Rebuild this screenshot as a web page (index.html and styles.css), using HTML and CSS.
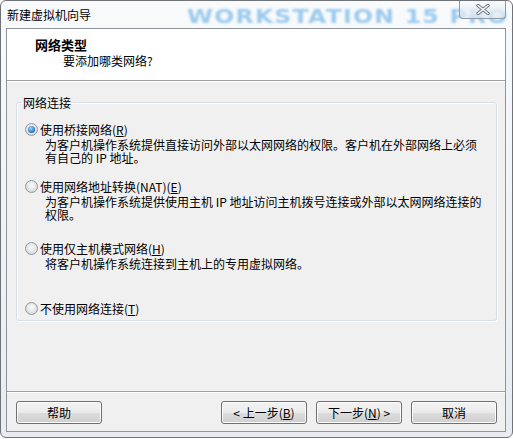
FILE: index.html
```html
<!DOCTYPE html>
<html lang="zh-CN">
<head>
  <meta charset="UTF-8">
  <title>新建虚拟机向导</title>
  <link rel="stylesheet" href="styles.css">
</head>
<body>
  <div class="window">
    <!-- Caption bar -->
    <div class="titlebar">
      <span class="brand">WORKSTATION 15 PRO</span>
      <span class="title">新建虚拟机向导</span>
      <button class="close-btn" type="button" aria-label="关闭">
        <svg width="14" height="11" viewBox="0 0 14 11">
          <path d="M2 1.5 L12 9.5 M12 1.5 L2 9.5" stroke="#6b7480" stroke-width="3.4" stroke-linecap="round" fill="none"/>
          <path d="M2 1.5 L12 9.5 M12 1.5 L2 9.5" stroke="#ffffff" stroke-width="1.6" stroke-linecap="round" fill="none"/>
        </svg>
      </button>
    </div>

    <div class="client">
      <!-- Wizard header -->
      <div class="header">
        <div class="header-title">网络类型</div>
        <div class="header-sub">要添加哪类网络?</div>
      </div>

      <!-- Page body -->
      <div class="content">
        <fieldset class="group">
          <legend>网络连接</legend>
          <div class="options">
            <div class="option">
              <div class="option-row"><span class="radio checked"></span>使用桥接网络(<u>R</u>)</div>
              <p class="option-desc">为客户机操作系统提供直接访问外部以太网网络的权限。客户机在外部网络上必须<br>有自己的 IP 地址。</p>
            </div>
            <div class="option option-nat">
              <div class="option-row"><span class="radio"></span>使用网络地址转换(NAT)(<u>E</u>)</div>
              <p class="option-desc">为客户机操作系统提供使用主机 IP 地址访问主机拨号连接或外部以太网网络连接的<br>权限。</p>
            </div>
            <div class="option option-host">
              <div class="option-row"><span class="radio"></span>使用仅主机模式网络(<u>H</u>)</div>
              <p class="option-desc">将客户机操作系统连接到主机上的专用虚拟网络。</p>
            </div>
            <div class="option option-none">
              <div class="option-row"><span class="radio"></span>不使用网络连接(<u>T</u>)</div>
            </div>
          </div>
        </fieldset>
      </div>

      <!-- Buttons -->
      <div class="footer">
        <button class="btn" type="button">帮助</button>
        <button class="btn btn-back" type="button">&lt; 上一步(<u>B</u>)</button>
        <button class="btn" type="button">下一步(<u>N</u>) &gt;</button>
        <button class="btn" type="button">取消</button>
      </div>
    </div>
  </div>
</body>
</html>
```

FILE: styles.css
```css
/* Page and base font */
body {
  margin: 0;
  background: #ffffff;
  font-family: "Noto Sans CJK SC", "Liberation Sans", sans-serif;
  font-size: 12px;
  color: #000000;
}

/* Outer window frame */
.window {
  width: 513px;
  height: 438px;
  box-sizing: border-box;
  border: 1px solid #6f7378;
  border-radius: 6px;
  padding: 0 6px 5px 5px;
  background: linear-gradient(to bottom, #f8fafc, #e8ecf0);
  display: flex;
  flex-direction: column;
  overflow: hidden;
}

/* Caption bar */
.titlebar {
  position: relative;
  height: 27px;
  display: flex;
  align-items: flex-start;
}

/* Blurred product watermark behind the caption */
.brand {
  position: absolute;
  left: 181px;
  top: 6px;
  font-family: "DejaVu Sans", sans-serif;
  font-weight: bold;
  font-size: 19px;
  line-height: 19px;
  letter-spacing: 1px;
  white-space: nowrap;
  color: #9ccbef;
  transform: scaleX(1.24);
  transform-origin: left center;
  filter: blur(0.8px);
  z-index: 0;
}

.title {
  position: relative;
  padding: 6px 0 0 1px;
  line-height: 15px;
  z-index: 1;
}

.close-btn {
  position: relative;
  z-index: 1;
  margin: -1px 0 0 auto;
  width: 47px;
  height: 19px;
  padding: 0;
  border: 1px solid #8f9aa6;
  border-top: none;
  border-radius: 0 0 4px 4px;
  background: linear-gradient(to bottom, rgba(250, 252, 254, 0.75), rgba(222, 230, 238, 0.75));
  display: flex;
  align-items: center;
  justify-content: center;
}

/* Client area */
.client {
  flex: 1;
  border: 1px solid #8e959d;
  background: #f0f0f0;
  display: flex;
  flex-direction: column;
}

.header {
  height: 52px;
  box-sizing: border-box;
  background: #ffffff;
  border-bottom: 1px solid #a0a0a0;
  padding: 7px 0 0 28px;
}

.header-title {
  font-size: 13px;
  font-weight: bold;
  line-height: 17px;
}

.header-sub {
  margin-left: 28px;
  line-height: 16px;
}

.content {
  flex: 1;
  border-top: 1px solid #ffffff;
  padding-top: 14px;
}

/* Group box */
.group {
  margin: 0 8px 0 9px;
  padding: 0 0 3px 0;
  border: 1px solid #d5dfe5;
  border-radius: 3px;
  box-shadow: inset 1px 1px 0 #ffffff, 1px 1px 0 #ffffff;
}

.group legend {
  margin-left: 4px;
  padding: 0 2px;
  line-height: 13px;
}

.options {
  margin: 12px 0 0 8px;
}

.option-nat {
  margin-top: 14px;
}

.option-host {
  margin-top: 19px;
}

.option-none {
  margin-top: 30px;
}

.option-row {
  display: flex;
  align-items: center;
  line-height: 17px;
  white-space: nowrap;
}

.option-desc {
  margin: 0 0 0 20px;
  line-height: 13px;
  white-space: nowrap;
}

/* Windows 7 style radio */
.radio {
  position: relative;
  width: 13px;
  height: 13px;
  box-sizing: border-box;
  margin-right: 2px;
  border: 1px solid #939a9f;
  border-radius: 50%;
  background: radial-gradient(circle at 50% 40%, #f4f5f6 15%, #dcdfe2 65%, #c8ccd0);
  flex-shrink: 0;
}

.radio.checked::after {
  content: "";
  position: absolute;
  left: 2px;
  top: 2px;
  width: 7px;
  height: 7px;
  border-radius: 50%;
  background: radial-gradient(circle at 40% 35%, #9fdcff, #2f7fc8 60%, #1a4f8f);
}

/* Button row */
.footer {
  height: 40px;
  box-sizing: border-box;
  border-top: 1px solid #a0a0a0;
  box-shadow: inset 0 1px 0 #ffffff;
  padding: 9px 8px 7px 9px;
  display: flex;
  gap: 9px;
}

.btn {
  width: 86px;
  height: 23px;
  box-sizing: border-box;
  padding: 0;
  border: 1px solid #707070;
  border-radius: 3px;
  background: linear-gradient(to bottom, #f2f2f2 0%, #ebebeb 50%, #dddddd 51%, #cfcfcf 100%);
  box-shadow: inset 0 0 0 1px #fbfbfb;
  font-family: inherit;
  font-size: 12px;
  line-height: 21px;
  color: #000000;
  white-space: nowrap;
}

.btn-back {
  margin-left: auto;
}
```
